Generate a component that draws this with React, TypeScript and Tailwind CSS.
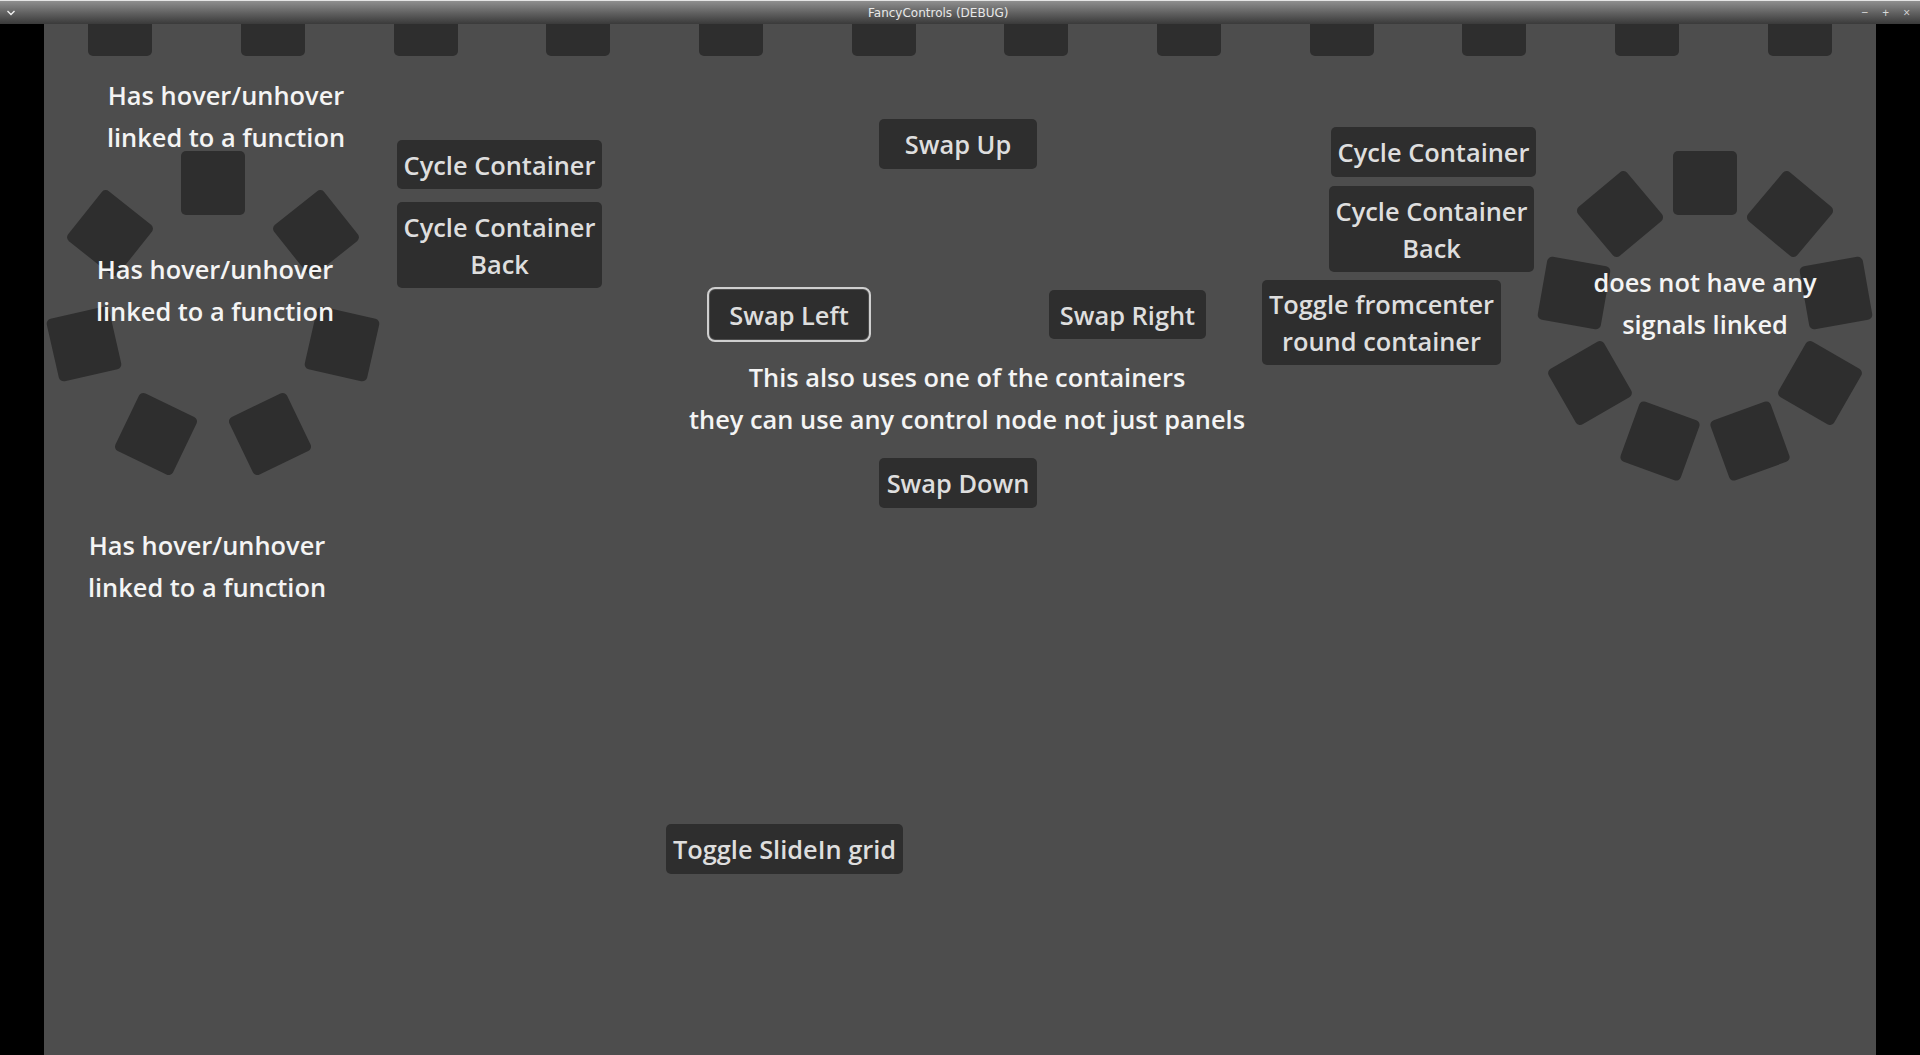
import React from 'react';

// Godot window: title bar, letterboxed 16:9 viewport
const FONT = { fontFamily: '"Open Sans", "Noto Sans", sans-serif' };

type Ring = { cx: number; cy: number; r: number; count: number };

const LEFT_RING: Ring = { cx: 169, cy: 291, r: 132, count: 7 };
const RIGHT_RING: Ring = { cx: 1661, cy: 292, r: 133, count: 9 };

const RoundContainer: React.FC<Ring> = ({ cx, cy, r, count }) => (
  <>
    {Array.from({ length: count }, (_, i) => {
      const deg = -90 + (360 / count) * i;
      const rad = (deg * Math.PI) / 180;
      const x = cx + r * Math.cos(rad);
      const y = cy + r * Math.sin(rad);
      return (
        <div
          key={i}
          className="absolute h-[64px] w-[64px] rounded-[5px] bg-[#2e2e2e]"
          style={{ left: x - 32, top: y - 32, transform: `rotate(${deg + 90}deg)` }}
        />
      );
    })}
  </>
);

const Btn: React.FC<{ className: string; focused?: boolean; children: React.ReactNode }> = ({
  className,
  focused,
  children,
}) => (
  <div
    className={`flex shrink-0 items-center justify-center rounded-[5px] bg-[#2e2e2e] pt-[1px] text-center text-[25.4px] font-semibold leading-[36.7px] text-[#dedede] ${
      focused ? 'outline-2 outline-offset-1 outline-[#cfcfcf]' : ''
    } ${className}`}
  >
    <span>{children}</span>
  </div>
);

const Label: React.FC<{ className: string; children: React.ReactNode }> = ({ className, children }) => (
  <div
    className={`whitespace-nowrap text-center text-[25.4px] font-semibold leading-[41.6px] text-[#f4f4f4] ${className}`}
  >
    {children}
  </div>
);

export default function App() {
  return (
    <div className="flex h-[1055px] w-[1920px] flex-col overflow-hidden bg-black" style={FONT}>
      <header className="relative flex h-[24px] items-center border-t border-[#e4e4e4] bg-linear-to-b from-[#8f8f8f] to-[#3a3a3a] px-[6px]">
        <svg width="10" height="8" viewBox="0 0 10 8" className="text-[#f0f0f0]">
          <path d="M1.5 2 L5 5.5 L8.5 2" fill="none" stroke="currentColor" strokeWidth="1.4" />
        </svg>
        <span
          className="absolute left-[868px] top-[4px] text-[12px] leading-[16px] text-[#e8e8e8]"
          style={{ fontFamily: '"DejaVu Sans", sans-serif' }}
        >
          FancyControls (DEBUG)
        </span>
        <div className="ml-auto flex items-center gap-[14px] pr-[4px] text-[12px] leading-none text-[#dadada]">
          <span>−</span>
          <span>+</span>
          <span>×</span>
        </div>
      </header>

      <div className="flex flex-1">
        <div className="w-[44px] bg-black" />
        <main className="relative w-[1832px] overflow-hidden bg-[#4d4d4d]">
          {/* slide-in grid, half off screen */}
          <div className="-mt-[32px] grid grid-cols-12">
            {Array.from({ length: 12 }, (_, i) => (
              <div key={i} className="flex justify-center">
                <div className="h-[64px] w-[64px] rounded-[5px] bg-[#2e2e2e]" />
              </div>
            ))}
          </div>

          <RoundContainer {...LEFT_RING} />
          <RoundContainer {...RIGHT_RING} />

          <Label className="absolute left-[182px] top-[51px] -translate-x-1/2">
            Has hover/unhover
            <br />
            linked to a function
          </Label>
          <Label className="absolute left-[171px] top-[225px] -translate-x-1/2">
            Has hover/unhover
            <br />
            linked to a function
          </Label>
          <Label className="absolute left-[163px] top-[501px] -translate-x-1/2">
            Has hover/unhover
            <br />
            linked to a function
          </Label>

          <div className="absolute left-[353px] top-[116px] flex w-[205px] flex-col gap-[13px]">
            <Btn className="h-[49px] w-[205px]">Cycle Container</Btn>
            <Btn className="h-[86px] w-[205px]">
              Cycle Container
              <br />
              Back
            </Btn>
          </div>

          <div className="absolute left-[666px] top-[95px] flex w-[496px] flex-col items-center">
            <Btn className="h-[50px] w-[158px]">Swap Up</Btn>
            <div className="mt-[121px] flex w-full justify-between">
              <Btn focused className="h-[49px] w-[158px]">
                Swap Left
              </Btn>
              <Btn className="h-[49px] w-[157px]">Swap Right</Btn>
            </div>
            <Label className="ml-[18px] mt-[18px]">
              This also uses one of the containers
              <br />
              they can use any control node not just panels
            </Label>
            <Btn className="mt-[18px] h-[50px] w-[158px]">Swap Down</Btn>
          </div>

          <div className="absolute left-[1218px] top-[103px] flex flex-col">
            <Btn className="ml-[69px] h-[50px] w-[205px]">Cycle Container</Btn>
            <Btn className="ml-[67px] mt-[9px] h-[86px] w-[205px]">
              Cycle Container
              <br />
              Back
            </Btn>
            <Btn className="mt-[8px] h-[85px] w-[239px]">
              Toggle fromcenter
              <br />
              round container
            </Btn>
          </div>

          <Label className="absolute left-[1661px] top-[238px] -translate-x-1/2">
            does not have any
            <br />
            signals linked
          </Label>

          <Btn className="absolute left-[622px] top-[800px] h-[50px] w-[237px]">Toggle SlideIn grid</Btn>
        </main>
        <div className="flex-1 bg-black" />
      </div>
    </div>
  );
}
